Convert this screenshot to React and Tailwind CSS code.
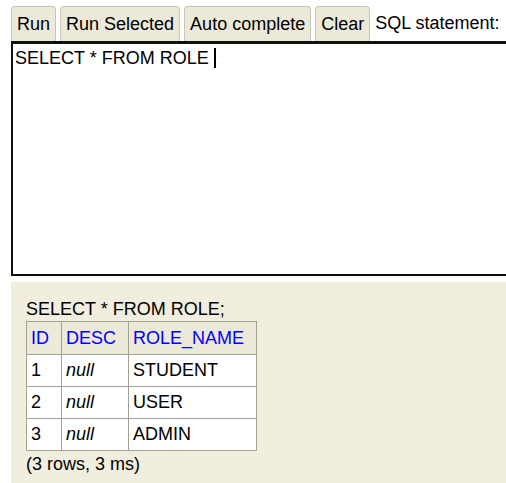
const rows = [
  { id: 1, desc: 'null', name: 'STUDENT' },
  { id: 2, desc: 'null', name: 'USER' },
  { id: 3, desc: 'null', name: 'ADMIN' },
];

const buttons = ['Run', 'Run Selected', 'Auto complete', 'Clear'];

export default function App() {
  return (
    <div className="w-[506px] h-[483px] overflow-hidden bg-white pl-[11px] pt-[6px] text-[18px] text-black font-['Liberation_Sans',Arial,sans-serif]">
      <div className="flex items-end gap-[4px] h-[35px]">
        {buttons.map((label) => (
          <div
            key={label}
            className="h-[35px] px-[5px] flex items-center rounded-t-[4px] border border-b-0 border-[#c8c5b8] bg-[#ece9d8] leading-none"
          >
            {label}
          </div>
        ))}
        <div className="h-[35px] flex items-center whitespace-nowrap pl-[1px]">SQL statement:</div>
      </div>

      <div className="w-[520px] h-[235px] border-2 border-t-[3px] border-[#111] border-b-[#0a0a0a] bg-white px-[2px] pt-[3px] leading-[22px]">
        <span>SELECT * FROM ROLE</span>
        <span className="inline-block align-top ml-[5px] mt-[1px] w-[2px] h-[20px] bg-black" />
      </div>

      <div className="mt-[6px] w-[520px] h-[220px] bg-[#f2eedf] pl-[15px] pt-[16px]">
        <div className="leading-[22px]">SELECT * FROM ROLE;</div>
        <table className="mt-[1px] border-collapse bg-white">
          <thead>
            <tr className="bg-[#ece9d8] text-[#0000ff]">
              <th className="w-[35px] h-[33px] border border-[#a3a094] px-[4px] text-left font-normal">ID</th>
              <th className="w-[67px] border border-[#a3a094] px-[4px] text-left font-normal">DESC</th>
              <th className="w-[128px] border border-[#a3a094] px-[4px] text-left font-normal">ROLE_NAME</th>
            </tr>
          </thead>
          <tbody>
            {rows.map((r) => (
              <tr key={r.id}>
                <td className="h-[32px] border border-[#a3a094] px-[4px]">{r.id}</td>
                <td className="border border-[#a3a094] px-[4px] italic">{r.desc}</td>
                <td className="border border-[#a3a094] px-[4px]">{r.name}</td>
              </tr>
            ))}
          </tbody>
        </table>
        <div className="mt-[1px] leading-[24px]">(3 rows, 3 ms)</div>
      </div>
    </div>
  );
}
